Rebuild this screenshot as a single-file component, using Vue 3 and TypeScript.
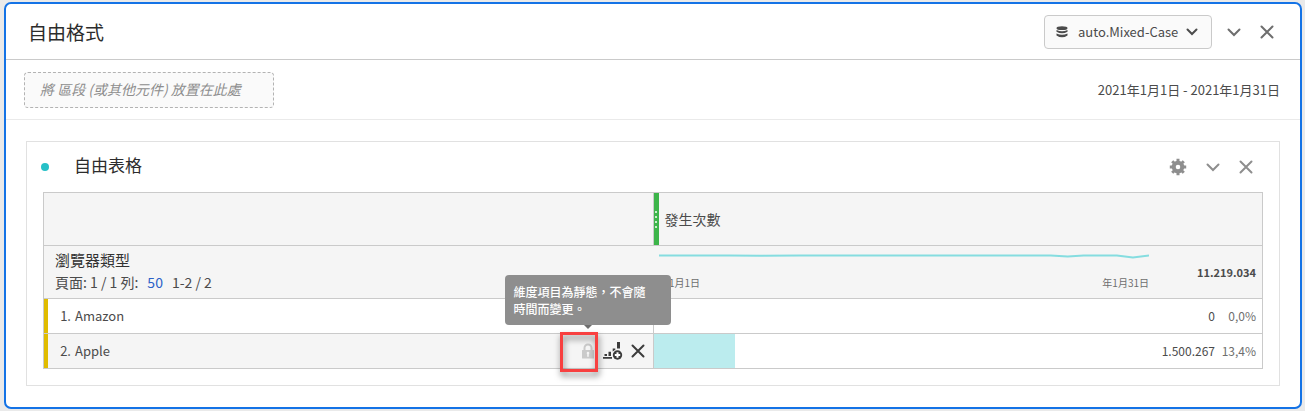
<script setup lang="ts">
import { ref } from 'vue'

interface Row {
  rank: number
  name: string
  count: string
  percent: string
  share: number
  active: boolean
}

const suite = ref('auto.Mixed-Case')

const rows: Row[] = [
  { rank: 1, name: 'Amazon', count: '0', percent: '0,0%', share: 0, active: false },
  { rank: 2, name: 'Apple', count: '1.500.267', percent: '13,4%', share: 13.4, active: true },
]

const trend = '0,3.4 70,3.4 100,3.8 140,3.4 390,3.4 407,4.6 423,3.5 456,3.5 472,5.5 488,3.6'
</script>

<template>
  <main class="page">
    <section class="panel">
      <header class="panel-head">
        <h1>自由格式</h1>
        <div class="suite">
          <svg class="db" viewBox="0 0 12 12" width="12" height="12" aria-hidden="true">
            <ellipse cx="6" cy="2.2" rx="5.5" ry="1.9" />
            <path d="M.5 4q5.5 2.6 11 0v1.8q-5.5 3-11 0z" />
            <path d="M.5 7.4q5.5 2.6 11 0v2q-5.5 3.8-11 0z" />
          </svg>
          <select v-model="suite" aria-label="報表套裝">
            <option>auto.Mixed-Case</option>
          </select>
          <svg class="caret" viewBox="0 0 12 8" width="12" height="8" aria-hidden="true">
            <path d="M1.5 1.5 6 6l4.5-4.5" />
          </svg>
        </div>
        <button class="icon-btn" type="button" aria-label="收合面板">
          <svg viewBox="0 0 14 14" width="14" height="14"><path d="M1.5 4.500 7 10l5.500-5.500" /></svg>
        </button>
        <button class="icon-btn" type="button" aria-label="關閉面板">
          <svg viewBox="0 0 14 14" width="14" height="14"><path d="m1.500 1.500 11 11M12.500 1.500l-11 11" /></svg>
        </button>
      </header>

      <div class="filters">
        <div class="dropzone">將 區段 (或其他元件) 放置在此處</div>
        <button class="dates" type="button">2021年1月1日 - 2021年1月31日</button>
      </div>

      <article class="card">
        <header class="card-head">
          <span class="dot"></span>
          <h2>自由表格</h2>
          <button class="icon-btn soft" type="button" aria-label="設定">
            <svg class="gear" viewBox="0 0 18 18" width="18" height="18">
              <circle class="ring" cx="9" cy="9" r="4.300" />
              <path class="teeth" d="M9 .8v3M9 14.200v3M.8 9h3M14.200 9h3M3.200 3.200l2.100 2.100M12.700 12.700l2.100 2.100M14.800 3.200l-2.100 2.100M5.300 12.700l-2.100 2.100" />
            </svg>
          </button>
          <button class="icon-btn soft" type="button" aria-label="收合表格">
            <svg viewBox="0 0 14 14" width="14" height="14"><path d="M1.500 4.500 7 10l5.500-5.500" /></svg>
          </button>
          <button class="icon-btn soft" type="button" aria-label="關閉表格">
            <svg viewBox="0 0 14 14" width="14" height="14"><path d="m1.500 1.500 11 11M12.500 1.500l-11 11" /></svg>
          </button>
        </header>

        <table>
          <thead>
            <tr class="metric-row">
              <td></td>
              <th scope="col">
                <div class="metric">
                  <span class="grip"><i></i><i></i><i></i><i></i></span>
                  發生次數
                </div>
              </th>
            </tr>
            <tr class="total-row">
              <th scope="col">
                <div class="dimension">瀏覽器類型</div>
                <div class="pager">
                  <span>頁面: 1 / 1 列:</span>
                  <a href="#rows">50</a>
                  <span>1-2 / 2</span>
                </div>
              </th>
              <td>
                <div class="summary">
                  <div class="trend">
                    <svg viewBox="0 0 488 8" height="8" preserveAspectRatio="none" aria-hidden="true">
                      <polyline :points="trend" />
                    </svg>
                    <div class="axis"><span>年1月1日</span><span>年1月31日</span></div>
                  </div>
                  <strong>11.219.034</strong>
                </div>
              </td>
            </tr>
          </thead>
          <tbody id="rows">
            <tr v-for="row in rows" :key="row.rank" :class="{ active: row.active }">
              <th scope="row">
                <div class="item">
                  <span class="rank">{{ row.rank }}.</span>
                  <span class="name">{{ row.name }}</span>
                  <div v-if="row.active" class="actions">
                    <span class="lock-wrap">
                      <button type="button" aria-label="鎖定" aria-describedby="lock-tip">
                        <svg class="lock" viewBox="0 0 14 16" width="14" height="16">
                          <path class="shackle" d="M3.500 8V5a3.500 3.500 0 0 1 7 0v3" />
                          <path fill-rule="evenodd" d="M1.500 7h11q.5 0 .5.500V15q0 .5-.5.500h-11Q1 15.500 1 15V7.500Q1 7 1.500 7zM7 8.800a1.400 1.400 0 0 0-.8 2.500v2.400h1.600v-2.400A1.400 1.400 0 0 0 7 8.800z" />
                        </svg>
                      </button>
                      <span class="marker"></span>
                      <span id="lock-tip" class="tip" role="tooltip">維度項目為靜態，不會隨<br />時間而變更。</span>
                    </span>
                    <button type="button" aria-label="新增視覺效果">
                      <svg class="chart" viewBox="0 0 20 18" width="20" height="18">
                        <path d="M0 15h9v1.700H0zM1.500 12h2.500v2H1.500zM5.500 9.700H8V14H5.500zM9.700 6.500h2.600v1.300L9.700 9.500zM14 0h3v6.500h-3z" />
                        <circle cx="14.500" cy="13" r="4.700" />
                        <path class="plus" d="M14.500 10.300v5.400M11.800 13h5.400" />
                      </svg>
                    </button>
                    <button type="button" aria-label="移除">
                      <svg class="remove" viewBox="0 0 14 14" width="14" height="14"><path d="m1.500 1.500 11 11M12.500 1.500l-11 11" /></svg>
                    </button>
                  </div>
                </div>
              </th>
              <td>
                <div class="value">
                  <span class="bar" :style="{ width: row.share + '%' }"></span>
                  <span class="count">{{ row.count }}</span>
                  <span class="percent">{{ row.percent }}</span>
                </div>
              </td>
            </tr>
          </tbody>
        </table>
      </article>
    </section>
  </main>
</template>

<style>
body {
  background: #eaeaea;
}
</style>

<style scoped>
* {
  box-sizing: border-box;
}

.page {
  padding: 2px 3px 2px 4px;
  font-family: "Noto Sans CJK TC", "Noto Sans", sans-serif;
  font-size: 13px;
  line-height: 20px;
  color: #4b4b4b;
}

h1,
h2 {
  margin: 0;
  font-weight: 400;
  color: #2c2c2c;
}

button {
  display: flex;
  padding: 0;
  border: 0;
  background: none;
  font: inherit;
  color: inherit;
  cursor: pointer;
}

svg {
  display: block;
  fill: currentColor;
}

.panel {
  border: 2px solid #1473e6;
  border-radius: 7px;
  background: #fff;
}

.panel-head {
  display: flex;
  align-items: center;
  height: 56px;
  padding: 0 26px 0 22px;
  border-bottom: 1px solid #cacaca;
}

h1 {
  flex: 1;
  font-size: 19px;
  line-height: 28px;
}

.suite {
  position: relative;
  display: flex;
  align-items: center;
  margin-right: 15px;
}

.suite select {
  appearance: none;
  height: 34px;
  padding: 0 32px 0 33px;
  border: 1px solid #cacaca;
  border-radius: 4px;
  background: #fafafa;
  font: inherit;
  color: #4b4b4b;
}

.db {
  position: absolute;
  left: 12px;
}

.caret {
  position: absolute;
  right: 14px;
  pointer-events: none;
}

.caret path,
.icon-btn path,
.remove path {
  fill: none;
  stroke: currentColor;
  stroke-width: 2;
  stroke-linecap: round;
}

.icon-btn {
  color: #6e6e6e;
}

.icon-btn + .icon-btn {
  margin-left: 19px;
}

.icon-btn.soft {
  color: #8e8e8e;
}

.gear .ring {
  fill: none;
  stroke: currentColor;
  stroke-width: 4;
}

.gear .teeth {
  stroke-width: 3;
  stroke-linecap: butt;
}

.filters {
  display: flex;
  align-items: center;
  justify-content: space-between;
  height: 60px;
  padding: 0 20px 0 18px;
  border-bottom: 1px solid #eaeaea;
}

.dropzone {
  width: 250px;
  height: 36px;
  padding: 0 15px;
  border: 1px dashed #b3b3b3;
  border-radius: 4px;
  background: #fafafa;
  font-size: 14px;
  font-style: italic;
  line-height: 32px;
  color: #8e8e8e;
}

.card {
  margin: 21px 20px;
  padding: 0 16px 16px;
  border: 1px solid #e1e1e1;
}

.card-head {
  display: flex;
  align-items: center;
  height: 50px;
  padding: 0 10px 0 0;
}

.dot {
  width: 8px;
  height: 8px;
  margin: 0 25px 0 -2px;
  border-radius: 50%;
  background: #26c0c7;
}

h2 {
  flex: 1;
  padding-bottom: 4px;
  font-size: 17px;
  line-height: 24px;
}

table {
  width: 100%;
  border-collapse: collapse;
  table-layout: fixed;
  border: 1px solid #cacaca;
}

th,
td {
  padding: 0;
  border: 1px solid #cacaca;
  font-weight: 400;
  text-align: left;
}

thead tr,
.active th {
  background: #f5f5f5;
}

.total-row th {
  padding: 0 11px;
  border-right: 0;
}

.total-row td {
  border-left: 0;
}

.metric {
  display: flex;
  align-items: center;
  gap: 6px;
  height: 52px;
  font-size: 14px;
}

.grip {
  display: flex;
  flex-direction: column;
  align-items: center;
  justify-content: center;
  gap: 3px;
  width: 5px;
  height: 100%;
  background: #3db54a;
}

.grip i {
  width: 2px;
  height: 2px;
  background: #c8f0cc;
}

.dimension {
  font-size: 15px;
  line-height: 22px;
  color: #323232;
}

.pager {
  display: flex;
  gap: 9px;
  padding-bottom: 3px;
  font-size: 14px;
  line-height: 22px;
}

.pager a {
  color: #2c62c8;
  text-decoration: none;
}

.summary {
  display: flex;
  align-items: center;
  height: 52px;
  padding: 0 6px;
}

.trend {
  flex: 1;
}

.trend svg {
  width: 100%;
}

.trend polyline {
  fill: none;
  stroke: #85dde0;
  stroke-width: 2;
}

.axis {
  display: flex;
  justify-content: space-between;
  padding-top: 14px;
  font-size: 10px;
  line-height: 18px;
  color: #6e6e6e;
}

strong {
  width: 107px;
  font-size: 11px;
  text-align: right;
}

.item {
  display: flex;
  align-items: center;
  height: 34px;
  padding-right: 8px;
  border-left: 4px solid #e0bc00;
}

.rank {
  width: 23px;
  text-align: right;
}

.name {
  flex: 1;
  padding-left: 4px;
}

.actions {
  display: flex;
  align-items: center;
  gap: 8px;
  color: #3c3c3c;
}

.lock-wrap {
  position: relative;
  color: #cacaca;
}

.shackle {
  fill: none;
  stroke: currentColor;
  stroke-width: 2;
}

.chart .plus {
  fill: none;
  stroke: #fff;
  stroke-width: 2;
}

.marker {
  position: absolute;
  top: -11px;
  right: -3px;
  width: 38px;
  height: 40px;
  border: 3px solid #f84040;
  filter: drop-shadow(1px 4px 3px rgba(0, 0, 0, 0.5));
  pointer-events: none;
}

.tip {
  position: absolute;
  bottom: 34px;
  left: -76px;
  width: 166px;
  padding: 8px 9px;
  border-radius: 4px;
  background: #8e8e8e;
  font-size: 12px;
  font-weight: 500;
  line-height: 17px;
  color: #fff;
  white-space: nowrap;
}

.tip::after {
  content: "";
  position: absolute;
  top: 100%;
  left: 79px;
  border: 4px solid transparent;
  border-top-color: #6e6e6e;
}

.value {
  position: relative;
  display: flex;
  align-items: center;
  justify-content: flex-end;
  height: 34px;
  padding-right: 6px;
  font-size: 12px;
}

.bar {
  position: absolute;
  top: 0;
  bottom: 0;
  left: 0;
  background: #bbecee;
}

.percent {
  width: 41px;
  text-align: right;
  color: #6e6e6e;
}
</style>
